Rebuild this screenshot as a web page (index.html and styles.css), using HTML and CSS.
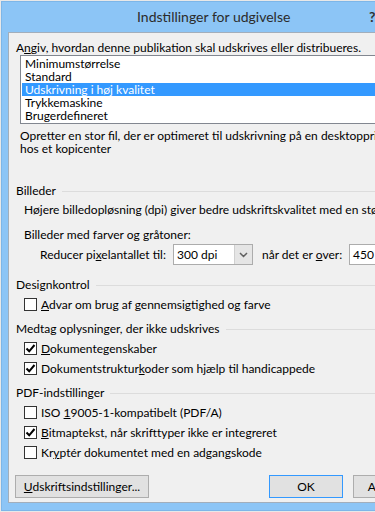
FILE: index.html
```html
<!DOCTYPE html>
<html lang="da">
<head>
    <meta charset="UTF-8">
    <meta name="viewport" content="width=device-width, initial-scale=1.0">
    <title>Indstillinger for udgivelse</title>
    <link rel="stylesheet" href="styles.css">
</head>
<body>
    <div id="dialog">
        <div class="titlebar">
            <span class="title">Indstillinger for udgivelse</span>
            <span class="help">?</span>
        </div>
        <div class="content">
            <div class="prompt">A<u>n</u>giv, hvordan denne publikation skal udskrives eller distribueres.</div>
            <ul class="listbox">
                <li>Minimumstørrelse</li>
                <li>Standard</li>
                <li class="selected">Udskrivning i høj kvalitet</li>
                <li>Trykkemaskine</li>
                <li>Brugerdefineret</li>
            </ul>
            <div class="description">Opretter en stor fil, der er optimeret til udskrivning på en desktopprinter eller<br>hos et kopicenter</div>

            <div class="group first">Billeder</div>
            <div class="row indent">Højere billedopløsning (dpi) giver bedre udskriftskvalitet med en større filstørrelse.</div>
            <div class="row indent gap">Billeder med farver og gråtoner:</div>
            <div class="row combo-row">
                <span class="combo-label">Reducer pi<u>x</u>elantallet til:</span>
                <div class="combo">
                    <span class="combo-value">300 dpi</span>
                    <span class="combo-arrow">
                        <svg width="9" height="6" viewBox="0 0 9 6"><path d="M1 1 L4.5 4.5 L8 1" fill="none" stroke="#606060" stroke-width="1.5"/></svg>
                    </span>
                </div>
                <span class="combo-label second">når det er <u>o</u>ver:</span>
                <div class="combo">
                    <span class="combo-value">450 dpi</span>
                    <span class="combo-arrow">
                        <svg width="9" height="6" viewBox="0 0 9 6"><path d="M1 1 L4.5 4.5 L8 1" fill="none" stroke="#606060" stroke-width="1.5"/></svg>
                    </span>
                </div>
            </div>

            <div class="group design">Designkontrol</div>
            <label class="row check"><span class="box"></span><span><u>A</u>dvar om brug af gennemsigtighed og farve</span></label>

            <div class="group">Medtag oplysninger, der ikke udskrives</div>
            <label class="row check"><span class="box checked"><svg width="11" height="11" viewBox="0 0 11 11"><path d="M1.5 5.5 L4.2 8.3 L9.5 2" fill="none" stroke="#000" stroke-width="2"/></svg></span><span><u>D</u>okumentegenskaber</span></label>
            <label class="row check"><span class="box checked"><svg width="11" height="11" viewBox="0 0 11 11"><path d="M1.5 5.5 L4.2 8.3 L9.5 2" fill="none" stroke="#000" stroke-width="2"/></svg></span><span>Dokumentstruktur<u>k</u>oder som hjælp til handicappede</span></label>

            <div class="group">PDF-indstillinger</div>
            <label class="row check"><span class="box"></span><span>ISO <u>1</u>9005-1-kompatibelt (PDF/A)</span></label>
            <label class="row check"><span class="box checked"><svg width="11" height="11" viewBox="0 0 11 11"><path d="M1.5 5.5 L4.2 8.3 L9.5 2" fill="none" stroke="#000" stroke-width="2"/></svg></span><span><u>B</u>itmaptekst, når skrifttyper ikke er integreret</span></label>
            <label class="row check"><span class="box"></span><span>Kr<u>y</u>ptér dokumentet med en adgangskode</span></label>

            <div class="buttons">
                <button class="btn wide"><u>U</u>dskriftsindstillinger...</button>
                <button class="btn default">OK</button>
                <button class="btn">Annuller</button>
            </div>
        </div>
    </div>
</body>
</html>
```

FILE: styles.css
```css
body {
    margin: 0;
    padding: 0;
    background-color: #e8e8e8;
    font-family: "Segoe UI", Lato, sans-serif;
    font-size: 12px;
    color: #000;
    overflow: hidden;
    width: 375px;
    height: 512px;
}

#dialog {
    margin: 1px 0 0 1px;
    width: 440px;
    background-color: #8cc5f6;
    padding: 0 6px 7px 6px;
    border: 1px solid #7db6e8;
    border-right: none;
}

.titlebar {
    height: 30px;
    line-height: 30px;
    position: relative;
    white-space: nowrap;
}

.title {
    display: block;
    padding-left: 129px;
    font-size: 14px;
    color: #2b2b2b;
}

.help {
    position: absolute;
    left: 361px;
    top: 0;
    font-size: 14px;
    font-weight: bold;
    color: #333;
}

.content {
    background-color: #f0f0f0;
    border: 1px solid #a2aebb;
    padding: 8px 7px 4px 7px;
    white-space: nowrap;
}

.prompt {
    line-height: 14px;
}

.listbox {
    list-style: none;
    margin: 0 0 0 4px;
    padding: 1px;
    background-color: #fff;
    border: 1px solid #828790;
}

.listbox li {
    height: 13px;
    line-height: 13px;
    padding-left: 3px;
}

.listbox li.selected {
    background-color: #3399ff;
    color: #fff;
}

.description {
    margin: 5px 0 0 4px;
    line-height: 13px;
}

.group {
    display: flex;
    align-items: center;
    height: 19px;
    margin-top: 5px;
}

.group::after {
    content: "";
    flex: 1;
    border-top: 1px solid #dcdcdc;
    margin-left: 6px;
    margin-top: 1px;
}

.group.first {
    margin-top: 26px;
}

.group.design {
    margin-top: 10px;
}

.row {
    height: 19px;
    line-height: 19px;
}

.indent {
    padding-left: 8px;
}

.gap {
    margin-top: 6px;
}

.combo-row {
    display: flex;
    align-items: center;
    height: 21px;
    padding-left: 24px;
}

.combo-label {
    width: 133px;
}

.combo-label.second {
    width: 87px;
    padding-left: 9px;
}

.combo {
    display: flex;
    width: 78px;
    height: 19px;
    border: 1px solid #acacac;
    background-color: #fff;
}

.combo-value {
    flex: 1;
    padding-left: 3px;
    line-height: 19px;
}

.combo-arrow {
    width: 17px;
    background-color: #e5e5e5;
    border-left: 1px solid #d0d0d0;
    display: flex;
    align-items: center;
    justify-content: center;
}

.check {
    display: flex;
    align-items: center;
    padding-left: 8px;
    margin-top: 1px;
}

.box {
    width: 11px;
    height: 11px;
    border: 1px solid #333;
    background-color: #fff;
    margin-right: 4px;
    display: flex;
    align-items: center;
    justify-content: center;
}

.buttons {
    display: flex;
    margin-top: 13px;
    margin-left: -1px;
}

.btn {
    height: 23px;
    width: 74px;
    font-family: inherit;
    font-size: 12px;
    color: #000;
    background-color: #e1e1e1;
    border: 1px solid #adadad;
    padding: 0;
}

.btn.wide {
    width: 134px;
}

.btn.default {
    margin-left: 120px;
    border-color: #3399ff;
}

.btn + .btn {
    margin-right: 10px;
}

.btn.default + .btn {
    margin-left: 0;
}
```
